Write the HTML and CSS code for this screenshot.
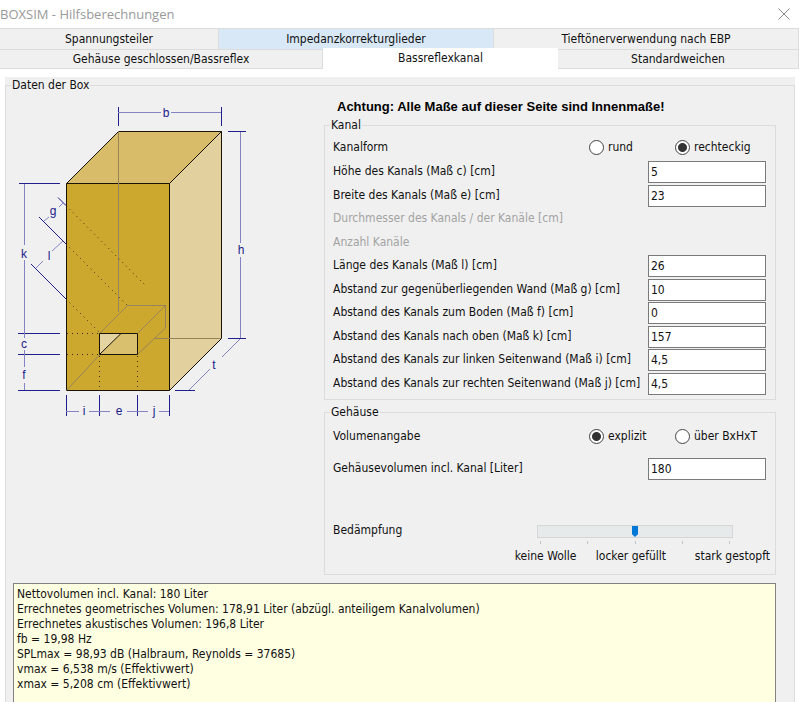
FILE: index.html
```html
<!DOCTYPE html>
<html lang="de">
<head>
    <meta charset="utf-8">
    <title>BOXSIM - Hilfsberechnungen</title>
    <link rel="stylesheet" href="styles.css">
</head>
<body>
    <header class="titlebar">
        <h1>BOXSIM - Hilfsberechnungen</h1>
        <button type="button" class="close" aria-label="Schließen">
            <svg width="12" height="12" viewBox="0 0 12 12"><path d="M0.5 0.5L11.5 11.5M11.5 0.5L0.5 11.5"/></svg>
        </button>
    </header>

    <nav class="tabs">
        <div class="tab-row row-back">
            <button type="button" class="tab">Spannungsteiler</button>
            <button type="button" class="tab hot">Impedanzkorrekturglieder</button>
            <button type="button" class="tab">Tieftönerverwendung nach EBP</button>
        </div>
        <div class="tab-row row-front">
            <button type="button" class="tab">Gehäuse geschlossen/Bassreflex</button>
            <button type="button" class="tab active">Bassreflexkanal</button>
            <button type="button" class="tab">Standardweichen</button>
        </div>
    </nav>

    <main class="page">
        <fieldset class="box-data">
            <legend>Daten der Box</legend>

            <div class="columns">
                <svg class="diagram" width="236" height="329" viewBox="13 93 236 329">
                    <!-- cabinet -->
                    <g class="edge">
                        <path fill="#d8bc69" d="M66.5 183.5L118.5 131.5H221.5L169.5 183.5Z"/>
                        <path fill="#e2d09f" d="M169.5 183.5L221.5 131.5V338.5L169.5 390.5Z"/>
                        <path fill="#cda82f" d="M66.5 183.5H169.5V390.5H66.5Z"/>
                    </g>
                    <!-- hidden edges and channel body -->
                    <path class="hidden" d="M118.5 131.5V312M155 338.5H221M66.5 390.5L99.5 355M99.5 333.5L127.5 305.5H165.5V328L137.5 354.5M137.5 333.5L165.5 305.5"/>
                    <!-- channel opening -->
                    <path fill="#d9c06f" d="M99.5 333.5H137.5V354.5H99.5Z"/>
                    <path fill="#e4d4a2" d="M99.5 333.5H121L99.5 354.5Z"/>
                    <path class="edge" fill="none" d="M99.5 333.5H137.5V354.5H99.5ZM99.5 354.5L121 333.5"/>
                    <path class="dots" d="M66 205.5L146.5 286.5M66 244L127 305M66 299L99 332M67 333.5H99M67 354.5H99M99.5 356V390M137.5 356V390"/>
                    <!-- dimension ticks -->
                    <path class="tick" d="M118.5 107V126M221.5 107V126M228 131.5H246M228 338.5H246M19 183.5H60M18 333.5H60M18 354.5H60M18 390.5H60M66.5 395V416M99.5 395V416M137.5 395V416M169.5 395V416M175 390.5H195M58 197.5L66 205.5M39 217L66 244M31 264L66 299"/>
                    <path class="dim" d="M118 112.5H161M171 112.5H221M240.5 132V243M240.5 257V338M24.5 184V245M24.5 260V338M24.5 350V367M24.5 383V390M66 411.5H79M89 411.5H110M127 411.5H148M159 411.5H169M189 390L210 369M222 357L240 339M64 202L59 207M49 217L44 221M63 241L52 251M43 261L36 268"/>
                    <g class="dim-text">
                        <text x="166" y="117">b</text>
                        <text x="241" y="254">h</text>
                        <text x="24" y="258">k</text>
                        <text x="53" y="215">g</text>
                        <text x="49" y="260">l</text>
                        <text x="24" y="348">c</text>
                        <text x="24" y="379">f</text>
                        <text x="84" y="415">i</text>
                        <text x="119" y="415">e</text>
                        <text x="154" y="415">j</text>
                        <text x="214" y="369">t</text>
                    </g>
                </svg>

                <div class="settings">
                    <p class="notice">Achtung: Alle Maße auf dieser Seite sind Innenmaße!</p>

                    <fieldset class="group">
                        <legend>Kanal</legend>
                        <div class="choice" role="radiogroup" aria-labelledby="form-label">
                            <span id="form-label">Kanalform</span>
                            <label><input type="radio" name="form">rund</label>
                            <label><input type="radio" name="form" checked>rechteckig</label>
                        </div>
                        <div class="fields">
                            <label class="field">Höhe des Kanals (Maß c) [cm]<input type="text" value="5"></label>
                            <label class="field">Breite des Kanals (Maß e) [cm]<input type="text" value="23"></label>
                            <span class="field disabled">Durchmesser des Kanals / der Kanäle [cm]</span>
                            <span class="field disabled">Anzahl Kanäle</span>
                            <label class="field">Länge des Kanals (Maß l) [cm]<input type="text" value="26"></label>
                            <label class="field">Abstand zur gegenüberliegenden Wand (Maß g) [cm]<input type="text" value="10"></label>
                            <label class="field">Abstand des Kanals zum Boden (Maß f) [cm]<input type="text" value="0"></label>
                            <label class="field">Abstand des Kanals nach oben (Maß k) [cm]<input type="text" value="157"></label>
                            <label class="field">Abstand des Kanals zur linken Seitenwand (Maß i) [cm]<input type="text" value="4,5"></label>
                            <label class="field">Abstand des Kanals zur rechten Seitenwand (Maß j) [cm]<input type="text" value="4,5"></label>
                        </div>
                    </fieldset>

                    <fieldset class="group housing">
                        <legend>Gehäuse</legend>
                        <div class="choice" role="radiogroup" aria-labelledby="volume-label">
                            <span id="volume-label">Volumenangabe</span>
                            <label><input type="radio" name="volume" checked>explizit</label>
                            <label><input type="radio" name="volume">über BxHxT</label>
                        </div>
                        <label class="field">Gehäusevolumen incl. Kanal [Liter]<input type="text" value="180"></label>
                        <div class="damping">
                            <label for="damping">Bedämpfung</label>
                            <div class="slider">
                                <input type="range" id="damping" min="0" max="4" value="2">
                                <div class="ticks"><i></i><i></i><i></i><i></i><i></i></div>
                            </div>
                        </div>
                        <div class="scale">
                            <span>keine Wolle</span>
                            <span>locker gefüllt</span>
                            <span>stark gestopft</span>
                        </div>
                    </fieldset>
                </div>
            </div>

            <textarea class="results" readonly aria-label="Ergebnis">Nettovolumen incl. Kanal: 180 Liter
Errechnetes geometrisches Volumen: 178,91 Liter (abzügl. anteiligem Kanalvolumen)
Errechnetes akustisches Volumen: 196,8 Liter
fb = 19,98 Hz
SPLmax = 98,93 dB (Halbraum, Reynolds = 37685)
vmax = 6,538 m/s (Effektivwert)
xmax = 5,208 cm (Effektivwert)</textarea>
        </fieldset>
    </main>
</body>
</html>
```
FILE: styles.css
```css
* {
    box-sizing: border-box;
}

body {
    margin: 0;
    height: 100vh;
    display: flex;
    flex-direction: column;
    overflow: hidden;
    background-color: #fff;
    color: #111;
    font: 12px/16px Tahoma, "DejaVu Sans Condensed", sans-serif;
}

button, input, textarea {
    font: inherit;
    color: inherit;
}

/* Title bar */
.titlebar {
    display: flex;
    justify-content: space-between;
    align-items: center;
    height: 28px;
    padding-right: 10px;
}

.titlebar h1 {
    margin: 0;
    font: 13px/18px "Segoe UI", "Open Sans", sans-serif;
    color: #999;
}

.close {
    display: flex;
    padding: 0;
    border: 0;
    background: none;
}

.close path {
    stroke: #888;
    fill: none;
}

/* Tabs */
.tabs {
    padding-right: 1px;
}

.tab-row {
    display: grid;
    height: 20px;
}

.row-back {
    grid-template-columns: 219fr 275fr 305fr;
    height: 21px;
}

.row-front {
    grid-template-columns: 323fr 235fr 241fr;
}

.tab {
    padding: 0;
    border: 1px solid #dcdcdc;
    border-width: 1px 1px 1px 0;
    background-color: #f0f0f0;
}

.row-back .tab {
    border-bottom: 0;
}

.tab.hot {
    background-color: #d8e8f7;
}

.tab.active {
    margin-top: -1px;
    padding-bottom: 2px;
    border: 0;
    background-color: #fff;
}

/* Page */
.page {
    flex: 1;
    display: flex;
    margin: 8px 5px 0;
    background-color: #f0f0f0;
}

fieldset {
    min-width: 0;
    margin: 0;
    padding: 0;
    border: 1px solid #dcdcdc;
}

legend {
    margin-left: 6px;
    padding: 0 1px;
}

.box-data {
    flex: 1;
    display: flex;
    flex-direction: column;
    border-bottom: 0;
    padding: 0 18px 0 7px;
}

.box-data > legend {
    margin-left: -2px;
}

.columns {
    display: grid;
    grid-template-columns: 311px 1fr;
}

/* Cabinet drawing */
.edge {
    stroke: #1a1408;
}

.hidden {
    fill: none;
    stroke: #978458;
}

.dots {
    fill: none;
    stroke: #3a2f10;
    stroke-dasharray: 1 4;
}

.tick {
    fill: none;
    stroke: #20208c;
}

.dim {
    fill: none;
    stroke: #8484c4;
}

.dim-text {
    fill: #20208c;
    font: 12px "Liberation Sans", Arial, sans-serif;
    text-anchor: middle;
}

.settings {
    padding-top: 6px;
}

.notice {
    margin: 0 0 2px 13px;
    color: #000;
    font: bold 13px/16px "Liberation Sans", Arial, sans-serif;
}

/* Groups */
.group {
    padding: 0 9px 3px 8px;
}

.group > legend {
    margin-left: -3px;
}

.choice {
    display: grid;
    grid-template-columns: 1fr 86px 91px;
    align-items: center;
    height: 28px;
}

.choice label {
    display: flex;
    align-items: center;
    gap: 4px;
    white-space: nowrap;
}

.choice input {
    appearance: none;
    width: 15px;
    height: 15px;
    margin: 0;
    border: 1px solid #444;
    border-radius: 50%;
    background-color: #fff;
}

.choice input:checked {
    background: radial-gradient(circle, #333 4px, #fff 5px);
}

.fields {
    display: grid;
    grid-template-rows: repeat(5, 24px 23px);
    align-items: start;
}

.field {
    display: flex;
    justify-content: space-between;
    line-height: 20px;
    white-space: nowrap;
}

.field input {
    width: 118px;
    height: 22px;
    padding: 0 2px;
    border: 1px solid #7a7a7a;
    background-color: #fff;
}

.disabled {
    color: #a3a3a3;
}

/* Housing */
.housing {
    margin-top: 4px;
    padding-bottom: 10px;
}

.housing .choice {
    height: 32px;
    margin-bottom: 6px;
}

.damping {
    display: flex;
    justify-content: space-between;
    margin-top: 42px;
    padding-right: 33px;
}

.slider {
    width: 196px;
    padding-top: 3px;
}

.slider input {
    appearance: none;
    display: block;
    width: 100%;
    height: 13px;
    margin: 0;
    border: 1px solid #d6d6d6;
    background-color: #e7eaea;
}

.slider input::-webkit-slider-thumb {
    appearance: none;
    width: 6px;
    height: 11px;
    background-color: #0078d7;
    clip-path: polygon(0 0, 100% 0, 100% 75%, 50% 100%, 0 75%);
}

.ticks {
    display: flex;
    justify-content: space-between;
    padding: 3px 3px 0;
}

.ticks i {
    width: 1px;
    height: 3px;
    background-color: #c4c4c4;
}

.scale {
    display: grid;
    grid-template-columns: 81px 99px auto;
    justify-content: end;
    margin: 4px -4px 0 0;
    white-space: nowrap;
}

/* Results */
.results {
    flex: 1;
    display: block;
    width: 100%;
    margin-top: 8px;
    padding: 3px;
    border: 1px solid #828282;
    border-bottom: 0;
    outline: 0;
    resize: none;
    overflow: hidden;
    background-color: #ffffe1;
    line-height: 15px;
}
```
